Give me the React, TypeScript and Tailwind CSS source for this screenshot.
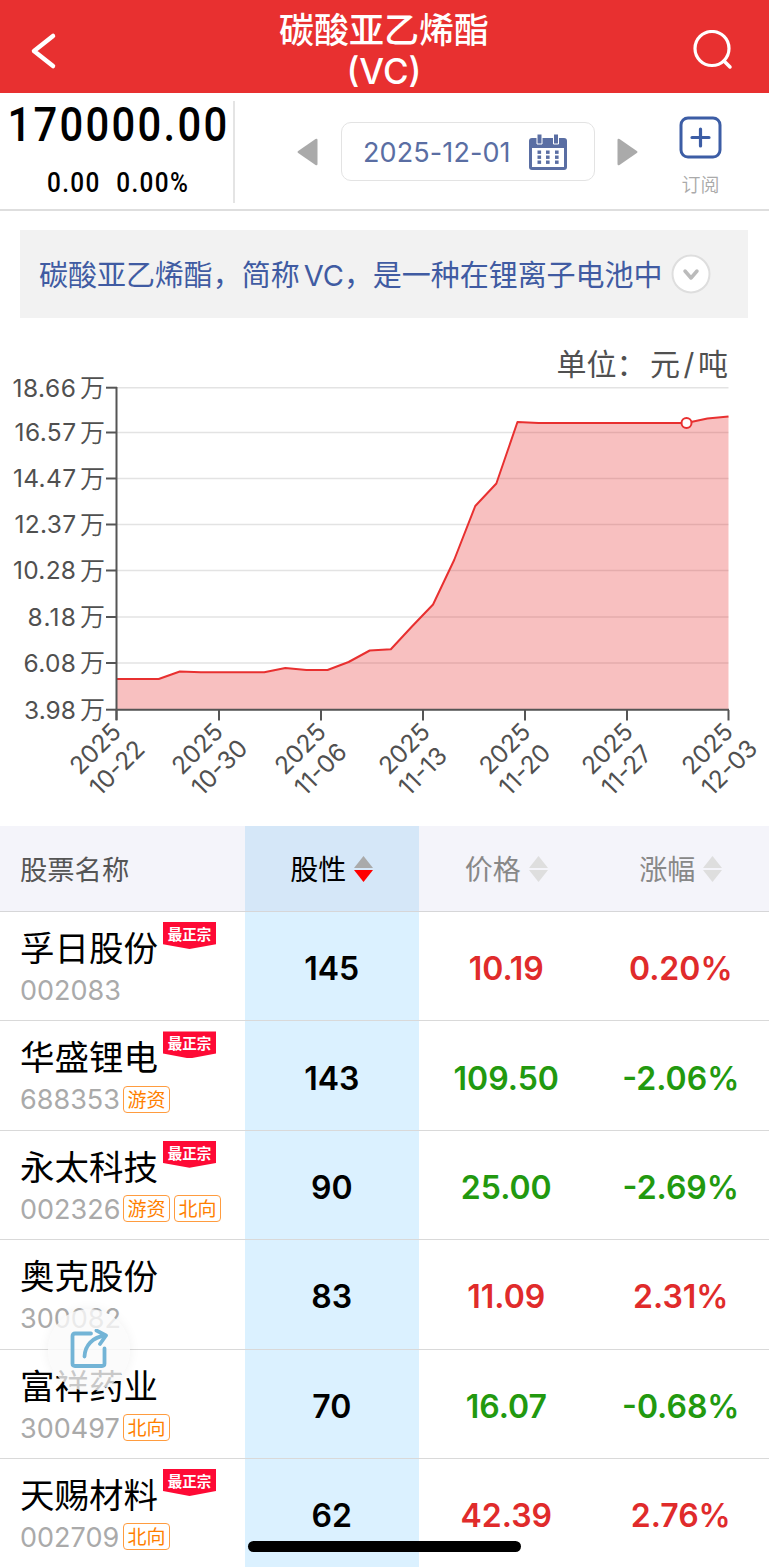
import React from "react";

const yTicks = [
  { y: 387.7, label: "18.66", x: 12.5, w: 63.5 },
  { y: 432.5, label: "16.57", x: 14.5, w: 61.5 },
  { y: 478.5, label: "14.47", x: 13, w: 63 },
  { y: 524.5, label: "12.37", x: 14.5, w: 61.5 },
  { y: 570.5, label: "10.28", x: 13, w: 63 },
  { y: 617, label: "8.18", x: 27.5, w: 48.5 },
  { y: 663, label: "6.08", x: 23.5, w: 52.5 },
  { y: 709.7, label: "3.98", x: 24, w: 52 },
];

const xTicks = [
  { x: 116.5, labelX: 80, label: "10-22" },
  { x: 219, labelX: 182, label: "10-30" },
  { x: 321, labelX: 285, label: "11-06" },
  { x: 423, labelX: 389, label: "11-13" },
  { x: 525, labelX: 489.5, label: "11-20" },
  { x: 627, labelX: 592, label: "11-27" },
  { x: 728.5, labelX: 692, label: "12-03" },
];

const series = [
  679, 679, 679, 671.5, 672.3, 672.3, 672.3, 672.3, 668, 670, 670, 662, 650.5, 649.3, 626.5, 604.5,
  560, 506, 483.5, 422, 423, 423, 423, 423, 423, 423, 423, 423, 418.5, 416.5,
];

const stocks = [
  { name: "孚日股份", code: "002083", top: true, tags: [], score: 145, price: "10.19", change: "0.20%", up: true },
  { name: "华盛锂电", code: "688353", top: true, tags: ["游资"], score: 143, price: "109.50", change: "-2.06%", up: false },
  { name: "永太科技", code: "002326", top: true, tags: ["游资", "北向"], score: 90, price: "25.00", change: "-2.69%", up: false },
  { name: "奥克股份", code: "300082", top: false, tags: [], score: 83, price: "11.09", change: "2.31%", up: true },
  { name: "富祥药业", code: "300497", top: false, tags: ["北向"], score: 70, price: "16.07", change: "-0.68%", up: false },
  { name: "天赐材料", code: "002709", top: true, tags: ["北向"], score: 62, price: "42.39", change: "2.76%", up: true },
];

const Header = () => (
  <header className="flex h-[93px] items-center justify-between bg-[#e83030] pr-9 pl-[30px] text-white">
    <svg width="28" height="38" viewBox="0 0 28 38" fill="none" className="mt-2">
      <path d="M23 4 4 19l19 15" stroke="currentColor" strokeWidth="4.5" strokeLinecap="round" strokeLinejoin="round" />
    </svg>
    <h1 className="ml-[17px] pt-2 text-center text-[35px] leading-[40px] font-medium">
      碳酸亚乙烯酯
      <br />
      <span className="inline-block pt-px">(VC)</span>
    </h1>
    <svg width="40" height="42" viewBox="0 0 40 42" fill="none" className="mt-2">
      <circle cx="19" cy="18.500" r="17" stroke="currentColor" strokeWidth="3.2" />
      <path d="m31 31 6 6" stroke="currentColor" strokeWidth="3.5" strokeLinecap="round" />
    </svg>
  </header>
);

const CalendarIcon = () => (
  <svg width="38" height="36" viewBox="0 0 38 36">
    <path d="M3 4h32q3 0 3 3v26q0 3-3 3H3q-3 0-3-3V7q0-3 3-3Z" fill="#5a6ea3" />
    <path d="M3 14h32v19H3Z" fill="#fff" />
    <path d="M8 0h5v10H8ZM24.500 0h5v10h-5Z" fill="#5a6ea3" stroke="#fff" strokeWidth="1" />
    {[16.5, 21.5, 26.5].map((y) =>
      [8.5, 17, 26].map((x) => <rect key={`${x}-${y}`} x={x} y={y} width="3.6" height="3.4" fill="#5a6ea3" />)
    )}
  </svg>
);

const Summary = () => (
  <section className="flex h-[118px] border-b-2 border-[#dedede]">
    <div className="mt-2 flex h-[102px] w-[235px] flex-col items-center border-r-2 border-[#e4e4e4] pl-[4px] font-['Roboto'] font-medium text-black">
      <div className="mt-[-4px] scale-x-[0.87] text-[48px] leading-[56px] tracking-[2.6px]">170000.00</div>
      <div className="mt-[14px] flex scale-x-[0.9] gap-[17px] text-[27px] leading-[32px] tracking-[1.6px]">
        <span>0.00</span>
        <span>0.00%</span>
      </div>
    </div>
    <div className="ml-[62px] flex h-[117px] items-center">
      <svg width="21" height="28" viewBox="0 0 21 28">
        <path d="M18.500 1 1.200 13q-1.400 1 0 2L18.500 27q2 .8 2-1V2q0-1.800-2-1Z" fill="#aaa" />
      </svg>
      <div className="ml-[23px] flex h-[59px] w-[254px] items-center rounded-[10px] border-[1.500px] border-[#e3e3e3] pl-[21px]">
        <span className="w-[149px] pt-[3px] text-[27px] tracking-[0.100px] whitespace-nowrap text-[#5a6ea3]">2025-12-01</span>
        <span className="ml-[17px]">
          <CalendarIcon />
        </span>
      </div>
      <svg width="21" height="28" viewBox="0 0 21 28" className="ml-[22px]">
        <path d="M2.500 1 19.800 13q1.400 1 0 2L2.500 27q-2 .8-2-1V2q0-1.800 2-1Z" fill="#aaa" />
      </svg>
    </div>
    <div className="ml-[41px] flex flex-col items-center pt-[23px]">
      <svg width="43" height="43" viewBox="0 0 43 43" fill="none" stroke="#3c5da5">
        <rect x="2" y="2" width="39" height="39" rx="7" strokeWidth="3" />
        <path d="M21.500 13v17M13 21.500h17" strokeWidth="3.200" strokeLinecap="round" />
      </svg>
      <span className="mt-[13px] text-[19px] leading-7 font-[350] text-[#aaa]">订阅</span>
    </div>
  </section>
);

const Chart = () => {
  const step = 612 / (series.length - 1);
  const line = series.map((y, i) => `${116.5 + i * step},${y}`).join(" ");

  return (
    <svg width="769" height="508" viewBox="0 318 769 508" className="block" fill="#505050">
      <text x="556.500" y="375" fontSize="30">
        单位：
      </text>
      <text x="650" y="375" fontSize="30" textLength="78">
        元/吨
      </text>
      {yTicks.map((t) => (
        <path key={t.label} d={`M117 ${t.y}H728.500`} stroke="#e3e3e3" strokeWidth="1.500" />
      ))}
      <polygon points={`116.5,709.5 ${line} 728.5,709.5`} fill="#e83030" fillOpacity="0.3" />
      <polyline points={line} fill="none" stroke="#e83030" strokeWidth="2" strokeLinejoin="round" />
      <circle cx="686.500" cy="423" r="5" fill="#fff" stroke="#e83030" strokeWidth="2" />
      <path d="M116.500 387V720M116 709.700H729" stroke="#555" strokeWidth="2" fill="none" />
      {yTicks.map((t) => (
        <g key={t.label}>
          <path d={`M106 ${t.y}H117`} stroke="#555" strokeWidth="2" />
          <text x={t.x} y={t.y + 8.8} fontSize="24.500" textLength={t.w}>
            {t.label}
          </text>
          <text x="80" y={t.y + 9} fontSize="25" fontWeight="350">
            万
          </text>
        </g>
      ))}
      {xTicks.map((t) => (
        <g key={t.label}>
          <path d={`M${t.x} 710V720.500`} stroke="#555" strokeWidth="2" />
          <g transform={`translate(${t.labelX} 776) rotate(-45)`} fontSize="24.500">
            <text x="0" y="0">2025</text>
            <text x="-1" y="29">{t.label}</text>
          </g>
        </g>
      ))}
    </svg>
  );
};

const SortIcon = ({ active = false }) => (
  <svg width="19" height="26" viewBox="0 0 19 26" className="mb-[3px]">
    <path d="M9.500 0 19 12H0Z" fill={active ? "#aaa" : "#dedede"} />
    <path d="M9.500 26 19 14H0Z" fill={active ? "#f00" : "#dedede"} />
  </svg>
);

const StockTable = () => (
  <section>
    <div className="grid h-[86px] grid-cols-[244.500px_174.500px_174.500px_174.500px] border-b-[1.500px] border-[#d6d6d8] bg-[#f4f4fa] text-[28px]">
      <div className="flex items-center pt-[5px] pl-5 text-[27.300px] text-[#555]">股票名称</div>
      <div className="flex items-center justify-center gap-2 bg-[#d5e7f8] pt-[3px] text-black">
        股性 <SortIcon active />
      </div>
      <div className="flex items-center justify-center gap-2 pt-[3px] text-[#888]">
        价格 <SortIcon />
      </div>
      <div className="flex items-center justify-center gap-2 pt-[3px] text-[#888]">
        涨幅 <SortIcon />
      </div>
    </div>
    {stocks.map((s, index) => (
      <div
        key={s.code}
        className={`grid grid-cols-[244.500px_174.500px_174.500px_174.500px] text-[32px] font-semibold ${
          index < stocks.length - 1 ? "h-[109.400px] border-b border-[#d9d9d9]" : "h-[108px]"
        } ${s.up ? "text-[#e02b2b]" : "text-[#22990f]"}`}
      >
        <div className="pt-2 pl-5 font-normal text-black">
          <div className="flex h-[54px]">
            <span className="text-[34.500px] leading-[57px]">{s.name}</span>
            {s.top && (
              <span className="mt-[2px] ml-[5px] h-[27px] w-[53px] bg-[#fe0a35] text-center text-[14.500px] leading-[25px] font-bold text-white [clip-path:polygon(0_0,100%_0,100%_82%,50%_100%,0_82%)]">
                最正宗
              </span>
            )}
          </div>
          <div className="flex h-8 items-center">
            <span className="w-[103px] pt-[2px] text-[27px] leading-8 text-[#aaa]">{s.code}</span>
            {s.tags.map((tag) => (
              <span
                key={tag}
                className="mr-1 flex h-[27px] w-[47px] items-center justify-center rounded-[4px] border-[1.500px] border-[#ff9c3f] pt-[2px] text-[19px] leading-none text-[#ff7f00]"
              >
                {tag}
              </span>
            ))}
          </div>
        </div>
        <div className="flex items-center justify-center bg-[#dbf1ff] pt-[6px] text-black">{s.score}</div>
        <div className="flex items-center justify-center pt-[6px]">{s.price}</div>
        <div className="flex items-center justify-center pt-[6px]">{s.change}</div>
      </div>
    ))}
  </section>
);

const ShareButton = () => (
  <button className="absolute top-[1309px] left-[48px] flex h-[82px] w-[82px] items-center justify-center rounded-full bg-[#fafafa]/80 shadow-[0_0_12px_rgba(0,0,0,0.060)]">
    <svg width="40" height="42" viewBox="0 0 40 42" fill="none" stroke="#73b4d6" strokeWidth="3.800" strokeLinecap="round" strokeLinejoin="round">
      <path d="M22 4.500H6Q3.500 4.500 3.500 7V34.500q0 2.500 2.500 2.500h27q2.500 0 2.500-2.500V19.500" />
      <path d="M15.500 27.500C16 17 23 8 36.500 6.500M27.500 1.500l9.500 5-6 8.500" />
    </svg>
  </button>
);

const App = () => {
  return (
    <div className="relative h-[1568px] w-[769px] overflow-hidden bg-white font-['Inter','Noto_Sans_CJK_SC',sans-serif]">
      <Header />
      <Summary />
      <div className="mx-5 mt-[19px] flex h-[88px] w-[728px] items-center bg-[#f2f2f2] pl-[19px]">
        <p className="w-[626px] pt-[3px] text-[29px] tracking-[-0.040px] whitespace-nowrap text-[#405ba2] [word-spacing:-4px]">
          碳酸亚乙烯酯，简称 VC，是一种在锂离子电池中
        </p>
        <svg width="40" height="40" viewBox="0 0 40 40" fill="none" className="ml-[6px] shrink-0">
          <circle cx="20" cy="20" r="18.500" fill="#fff" stroke="#dedede" strokeWidth="2" />
          <path d="m14 17 6 7 6-7" stroke="#bbb" strokeWidth="3.500" strokeLinecap="round" strokeLinejoin="round" />
        </svg>
      </div>
      <Chart />
      <StockTable />
      <ShareButton />
      <div className="absolute top-[1541px] left-[248px] h-[11px] w-[273px] rounded-full bg-black" />
    </div>
  );
};

export default App;
